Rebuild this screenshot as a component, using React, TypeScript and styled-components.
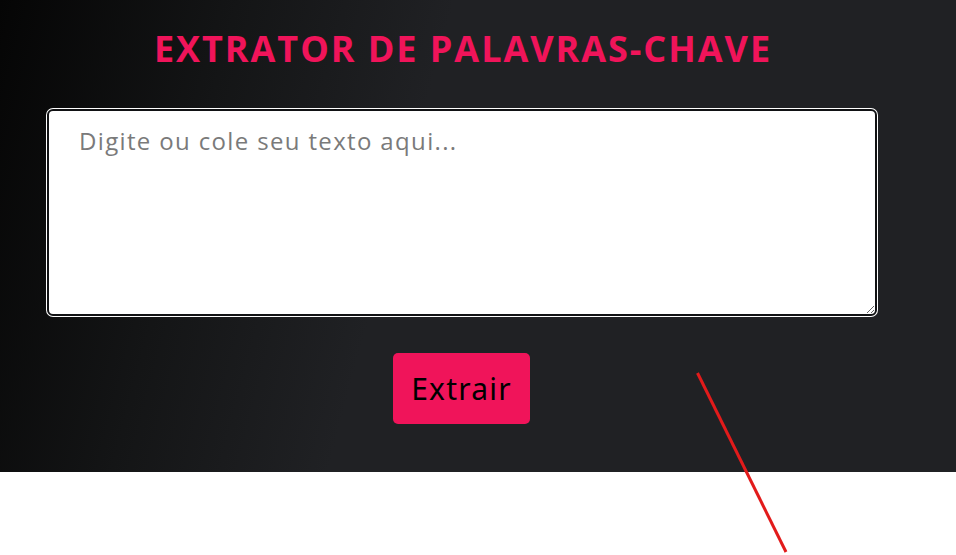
import React from "react"
import styled, { createGlobalStyle } from "styled-components"

const GlobalStyle = createGlobalStyle`
    html, body {
        margin: 0;
        padding: 0;
        background: #ffffff;
    }
    body {
        font-family: "Open Sans", "Liberation Sans", sans-serif;
    }
`

const Page = styled.div`
    position: relative;
    width: 100%;
    min-height: 555px;
    overflow: hidden;
`

const Hero = styled.section`
    height: 472px;
    box-sizing: border-box;
    padding: 26px 78px 0 46px;
    background: linear-gradient(105deg, #050505 0%, #141516 22%, #202124 42%, #202124 100%);
`

const Column = styled.div`
    display: flex;
    flex-direction: column;
    align-items: center;
`

const Title = styled.h1`
    margin: 0;
    padding-left: 2px;
    color: #f0145a;
    font-family: "Open Sans", "Liberation Sans", sans-serif;
    font-weight: 700;
    font-size: 36px;
    line-height: 46px;
    letter-spacing: 1.95px;
`

const TextArea = styled.textarea`
    box-sizing: border-box;
    width: 830px;
    height: 207px;
    margin: 37px 1px 0;
    padding: 13px 30px;
    border: 2px solid #111214;
    border-radius: 6px;
    box-shadow: 0 0 0 1px #ffffff;
    background: #ffffff;
    outline: none;
    font-family: "Open Sans", "Liberation Sans", sans-serif;
    font-size: 24px;
    letter-spacing: 1.35px;
    color: #222;

    &::placeholder {
        color: #7a7a7a;
    }
`

const ExtractButton = styled.button`
    margin-top: 37px;
    margin-right: 1px;
    width: 137px;
    height: 71px;
    border: none;
    border-radius: 5px;
    background: #f0145a;
    color: #000000;
    font-family: "Noto Sans", "Liberation Sans", sans-serif;
    font-size: 30px;
    letter-spacing: 1.2px;
    cursor: pointer;
`

const Annotation = styled.svg`
    position: absolute;
    left: 0;
    top: 0;
    pointer-events: none;
`

export default function App() {
    return (
        <Page>
            <GlobalStyle />
            <Hero>
                <Column>
                    <Title>EXTRATOR DE PALAVRAS-CHAVE</Title>
                    <TextArea placeholder="Digite ou cole seu texto aqui..." autoFocus />
                    <ExtractButton>Extrair</ExtractButton>
                </Column>
            </Hero>
            <Annotation width="956" height="555" viewBox="0 0 956 555">
                <line x1="697.5" y1="373" x2="786" y2="552" stroke="#e21b1b" strokeWidth="3" />
            </Annotation>
        </Page>
    )
}
